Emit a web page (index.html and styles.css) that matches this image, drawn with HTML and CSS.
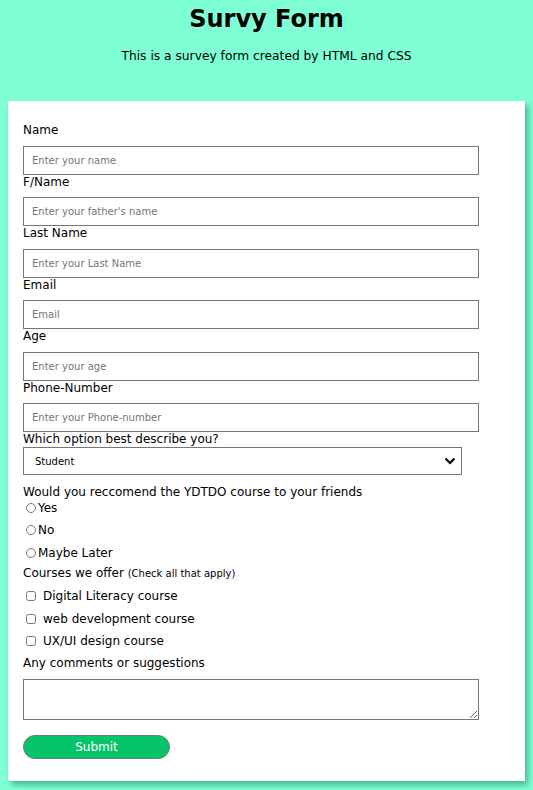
FILE: index.html
```html
<!DOCTYPE html>
<html>
<head>
<meta charset="utf-8">
<link rel="stylesheet" href="styles.css">
</head>
<body>
<h1 class="title">Survy Form</h1>
<p class="subtitle">This is a survey form created by HTML and CSS</p>
<form class="card">
  <label class="lbl" for="name">Name</label>
  <input class="field" id="name" type="text" placeholder="Enter your name">
  <label class="lbl" for="fname">F/Name</label>
  <input class="field" id="fname" type="text" placeholder="Enter your father's name">
  <label class="lbl" for="lname">Last Name</label>
  <input class="field" id="lname" type="text" placeholder="Enter your Last Name">
  <label class="lbl" for="email">Email</label>
  <input class="field" id="email" type="email" placeholder="Email">
  <label class="lbl" for="age">Age</label>
  <input class="field" id="age" type="text" placeholder="Enter your age">
  <label class="lbl" for="phone">Phone-Number</label>
  <input class="field" id="phone" type="text" placeholder="Enter your Phone-number">
  <label class="lbl lbl-tight" for="role">Which option best describe you?</label>
  <div class="select-wrap">
    <select class="select" id="role">
      <option>Student</option>
      <option>Full Time Job</option>
      <option>Other</option>
    </select>
    <svg class="chev" width="12" height="8" viewBox="0 0 12 8"><path d="M1.5 1.5 L6 6 L10.5 1.5" fill="none" stroke="#000" stroke-width="2.2"/></svg>
  </div>
  <p class="question">Would you reccomend the YDTDO course to your friends</p>
  <div class="opt opt-first"><input class="radio" type="radio" name="rec" id="r1"><label for="r1">Yes</label></div>
  <div class="opt"><input class="radio" type="radio" name="rec" id="r2"><label for="r2">No</label></div>
  <div class="opt"><input class="radio" type="radio" name="rec" id="r3"><label for="r3">Maybe Later</label></div>
  <p class="question q2">Courses we offer <span class="small">(Check all that apply)</span></p>
  <div class="chk chk-first"><input class="box" type="checkbox" id="c1"><label for="c1">Digital Literacy course</label></div>
  <div class="chk"><input class="box" type="checkbox" id="c2"><label for="c2">web development course</label></div>
  <div class="chk"><input class="box" type="checkbox" id="c3"><label for="c3">UX/UI design course</label></div>
  <p class="question q3">Any comments or suggestions</p>
  <textarea class="comments"></textarea>
  <button class="submit" type="button">Submit</button>
</form>
</body>
</html>
```
FILE: styles.css
```css
html, body {
  margin: 0;
  padding: 0;
}
body {
  background: #7fffd4;
  font-family: "DejaVu Sans", Verdana, sans-serif;
  color: #000;
  font-size: 12px;
  padding: 0 8px 8px;
}
.title {
  margin: 0;
  padding-top: 4px;
  text-align: center;
  font-size: 24px;
  line-height: 30px;
  font-weight: bold;
}
.subtitle {
  margin: 14px 0 0;
  text-align: center;
  font-size: 12.25px;
  line-height: 16px;
}
.card {
  margin-top: 37px;
  background: #fff;
  padding: 22px 15px 22px;
  box-shadow: 3px 4px 6px rgba(0, 70, 50, 0.4);
  display: flex;
  flex-direction: column;
  align-items: flex-start;
}
.lbl {
  display: block;
  line-height: 15px;
  margin-bottom: 7.5px;
}
.lbl-tight {
  margin-bottom: 0;
}
.field {
  box-sizing: border-box;
  width: 456px;
  height: 29px;
  margin: 0;
  border: 1px solid #767676;
  border-radius: 0;
  padding: 0 8px;
  font-family: "DejaVu Sans", Verdana, sans-serif;
  font-size: 10px;
}
.field::placeholder {
  color: #757575;
}
.select-wrap {
  position: relative;
  width: 439px;
  height: 28px;
}
.select {
  box-sizing: border-box;
  width: 439px;
  height: 28px;
  margin: 0;
  border: 1px solid #767676;
  border-radius: 0;
  background: #fff;
  padding: 0 11px;
  font-family: "DejaVu Sans", Verdana, sans-serif;
  font-size: 10px;
  color: #000;
  appearance: none;
  -webkit-appearance: none;
}
.chev {
  position: absolute;
  right: 6px;
  top: 10px;
  pointer-events: none;
}
.question {
  margin: 10px 0 0;
  line-height: 15px;
}
.opt {
  display: flex;
  align-items: center;
  height: 22.5px;
}
.opt-first {
  height: 15px;
  margin-bottom: 4px;
}
.radio {
  width: 10px;
  height: 10px;
  margin: 0 2px 0 3px;
}
.q2 {
  margin-top: 2px;
}
.small {
  font-size: 10px;
}
.chk {
  display: flex;
  align-items: center;
  height: 22.5px;
}
.chk-first {
  margin-top: 4px;
}
.box {
  width: 10px;
  height: 10px;
  margin: 0 7px 0 3px;
}
.q3 {
  margin-top: 3px;
}
.comments {
  box-sizing: border-box;
  width: 456px;
  height: 41px;
  margin: 8px 0 0;
  border: 1px solid #767676;
  border-radius: 0;
}
.submit {
  box-sizing: border-box;
  margin-top: 15px;
  width: 147px;
  height: 24px;
  border: 1px solid #767676;
  border-radius: 12px;
  background: #05c46b;
  color: #fff;
  font-family: "DejaVu Sans", Verdana, sans-serif;
  font-size: 12px;
  padding: 0;
}
```
